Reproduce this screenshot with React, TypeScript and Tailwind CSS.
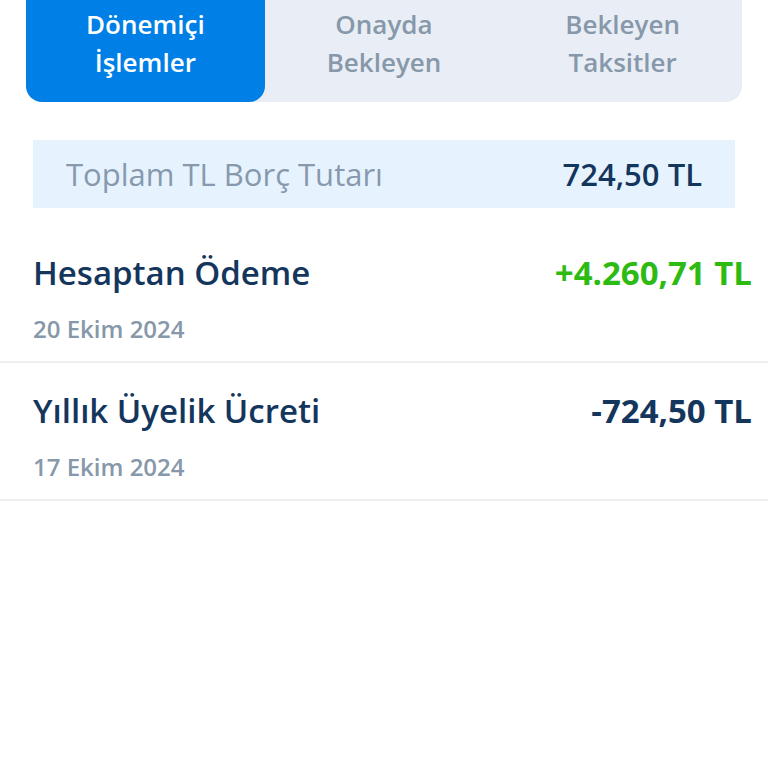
import { useState } from "react";
import { clsx } from "clsx";

const TABS = [
  { id: "period", lines: ["Dönemiçi", "İşlemler"] },
  { id: "pending", lines: ["Onayda", "Bekleyen"] },
  { id: "installments", lines: ["Bekleyen", "Taksitler"] },
];

const TRANSACTIONS = [
  { title: "Hesaptan Ödeme", date: "20 Ekim 2024", amount: "+4.260,71 TL", credit: true },
  { title: "Yıllık Üyelik Ücreti", date: "17 Ekim 2024", amount: "-724,50 TL", credit: false },
];

export default function App() {
  const [active, setActive] = useState("period");

  return (
    <main className="min-h-screen bg-white font-['Open_Sans',sans-serif] text-[#14365d]">
      {/* Tabs */}
      <div role="tablist" className="mx-[26px] grid grid-cols-3 rounded-b-2xl bg-[#e9edf5]">
        {TABS.map((tab) => (
          <button
            key={tab.id}
            type="button"
            role="tab"
            aria-selected={active === tab.id}
            onClick={() => setActive(tab.id)}
            className={clsx(
              "rounded-b-2xl pt-[5px] pb-[21px] text-[26px] leading-[38px] font-semibold",
              active === tab.id ? "bg-[#007fe6] text-white" : "text-[#8698a9]"
            )}
          >
            {tab.lines.map((line) => (
              <span key={line} className="block">
                {line}
              </span>
            ))}
          </button>
        ))}
      </div>

      {/* Total debt */}
      <div className="mx-[33px] mt-[38px] flex h-[68px] items-center justify-between bg-[#e6f3ff] px-[33px] text-[31px]">
        <span className="text-[#8799ad]">Toplam TL Borç Tutarı</span>
        <span className="font-semibold">724,50 TL</span>
      </div>

      <ul className="mt-[17px]">
        {TRANSACTIONS.map((item) => (
          <li key={item.title} className="border-b-2 border-[#efefef] pt-6 pr-4 pb-3.5 pl-[33px]">
            <div className="flex items-center justify-between text-[33px] leading-[48px]">
              <h2 className="font-semibold">{item.title}</h2>
              <span className={clsx("font-bold", item.credit && "text-[#2dbb13]")}>{item.amount}</span>
            </div>
            <p className="mt-3.5 text-[24px] leading-9 font-semibold text-[#8698a9]">{item.date}</p>
          </li>
        ))}
      </ul>
    </main>
  );
}
